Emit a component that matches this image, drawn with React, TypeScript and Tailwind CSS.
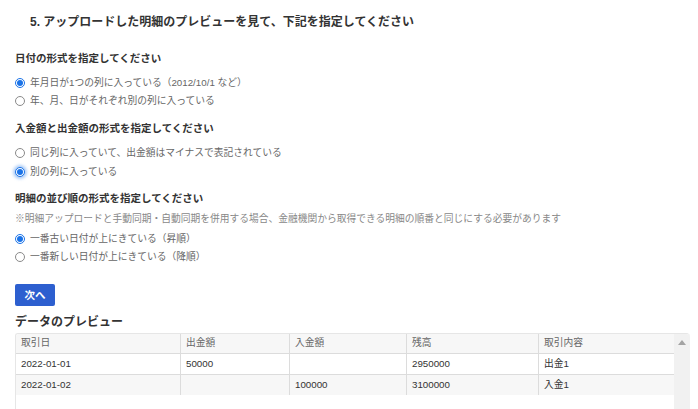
import React from "react";

const font = { fontFamily: '"Liberation Sans", "Noto Sans CJK JP", sans-serif' };

function Radio({ checked, focus, label }: { checked?: boolean; focus?: boolean; label: string }) {
  return (
    <div className="flex items-center h-[18px]">
      <span
        className={
          "flex items-center justify-center w-[10px] h-[10px] rounded-full border shrink-0 " +
          (checked ? "border-[#1a73e8] bg-white" : "border-[#8a8a8a] bg-white") +
          (focus ? " shadow-[0_0_3px_2px_rgba(26,115,232,0.35)]" : "")
        }
      >
        {checked && <span className="w-[6px] h-[6px] rounded-full bg-[#1a73e8]" />}
      </span>
      <span className="ml-[5px] text-[9.75px] leading-[14px] text-[#666]">{label}</span>
    </div>
  );
}

const cols = ["w-[165px]", "w-[109px]", "w-[117px]", "w-[132px]", "w-[135px]"];

function Row({ cells, bg, header, last }: { cells: string[]; bg: string; header?: boolean; last?: boolean }) {
  return (
    <div className={"flex " + bg + (last ? "" : " border-b border-[#dcdcdc]")}>
      {cells.map((c, i) => (
        <div
          key={i}
          className={
            cols[i] +
            " shrink-0 px-[5px] flex items-center text-[9.75px] " +
            (header ? "h-[19px] text-[#666]" : "h-[20px] text-[#333]") +
            (i < 4 ? " border-r border-[#dcdcdc]" : "")
          }
        >
          {c}
        </div>
      ))}
    </div>
  );
}

export default function App() {
  return (
    <div className="w-[698px] h-[409px] overflow-hidden bg-white" style={font}>
      <div className="flex flex-col">
        <div className="pt-[14px] pl-[30px] text-[12px] leading-[16px] font-bold text-[#333]">
          5. アップロードした明細のプレビューを見て、下記を指定してください
        </div>
        <div className="pl-[15px] flex flex-col">
          <div className="mt-[21px] text-[10.5px] leading-[14px] font-bold text-[#333]">日付の形式を指定してください</div>
          <div className="mt-[9px]">
            <Radio checked label="年月日が1つの列に入っている（2012/10/1 など）" />
            <Radio label="年、月、日がそれぞれ別の列に入っている" />
          </div>
          <div className="mt-[11px] text-[10.5px] leading-[14px] font-bold text-[#333]">入金額と出金額の形式を指定してください</div>
          <div className="mt-[9px]">
            <Radio label="同じ列に入っていて、出金額はマイナスで表記されている" />
            <div className="h-[1px]" />
            <Radio checked focus label="別の列に入っている" />
          </div>
          <div className="mt-[10px] text-[10.5px] leading-[14px] font-bold text-[#333]">明細の並び順の形式を指定してください</div>
          <div className="mt-[7px] text-[9.75px] leading-[14px] text-[#888]">
            ※明細アップロードと手動同期・自動同期を併用する場合、金融機関から取得できる明細の順番と同じにする必要があります
          </div>
          <div className="mt-[4px]">
            <Radio checked label="一番古い日付が上にきている（昇順）" />
            <Radio label="一番新しい日付が上にきている（降順）" />
          </div>
          <div className="mt-[18px]">
            <button className="w-[40px] h-[22px] rounded-[2px] bg-[#2d5fcf] text-white text-[10.5px] font-bold leading-none flex items-center justify-center">
              次へ
            </button>
          </div>
          <div className="mt-[8px] text-[12px] leading-[16px] font-bold text-[#333]">データのプレビュー</div>
          <div className="mt-[3px] w-[675px] h-[100px] flex border-l border-t border-[#e6e6e6] rounded-tl-[3px] rounded-tr-[4px] overflow-hidden">
            <div className="w-[658px] shrink-0">
              <Row header bg="bg-[#f7f7f7]" cells={["取引日", "出金額", "入金額", "残高", "取引内容"]} />
              <Row bg="bg-white" cells={["2022-01-01", "50000", "", "2950000", "出金1"]} />
              <Row last bg="bg-[#f7f7f7]" cells={["2022-01-02", "", "100000", "3100000", "入金1"]} />
            </div>
            <div className="flex-1 bg-[#f1f1f1] flex justify-center pt-[6px]">
              <svg width="8" height="5" viewBox="0 0 8 5">
                <polygon points="4,0 8,5 0,5" fill="#a3a3a3" />
              </svg>
            </div>
          </div>
        </div>
      </div>
    </div>
  );
}
